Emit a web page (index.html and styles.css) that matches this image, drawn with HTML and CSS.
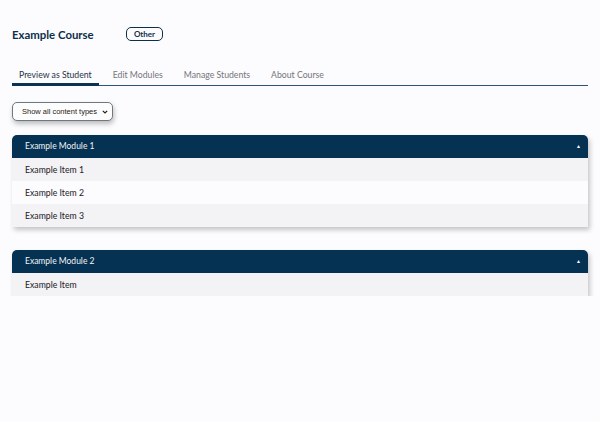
FILE: index.html
```html
<!DOCTYPE html>
<html>
<head>
<meta charset="utf-8">
<link rel="stylesheet" href="styles.css">
</head>
<body>
<div class="page">
  <div class="header">
    <h1 class="title">Example Course</h1>
    <span class="badge">Other</span>
  </div>
  <nav class="tabs">
    <a class="tab active">Preview as Student</a>
    <a class="tab">Edit Modules</a>
    <a class="tab">Manage Students</a>
    <a class="tab">About Course</a>
  </nav>
  <div class="filter">
    <div class="select-wrap">
      <select class="select">
        <option>Show all content types</option>
      </select>
      <svg class="chevron" width="6" height="4" viewBox="0 0 6 4"><path d="M0.8 0.8 L3 3 L5.2 0.8" fill="none" stroke="#222" stroke-width="1.2"/></svg>
    </div>
  </div>
  <div class="modules">
    <section class="module">
      <div class="module-head"><span>Example Module 1</span><span class="arrow">▲</span></div>
      <div class="item">Example Item 1</div>
      <div class="item">Example Item 2</div>
      <div class="item">Example Item 3</div>
    </section>
    <section class="module">
      <div class="module-head"><span>Example Module 2</span><span class="arrow">▲</span></div>
      <div class="item">Example Item</div>
    </section>
  </div>
</div>
</body>
</html>
```

FILE: styles.css
```css
html, body {
  margin: 0;
  padding: 0;
  background: #fcfbfd;
}
body {
  font-family: "Lato", "Noto Sans", sans-serif;
  color: #1d1d24;
}
.page {
  padding: 25px 12px 0 12px;
}
.header {
  display: flex;
  align-items: center;
  height: 18px;
}
.title {
  margin: 0;
  width: 114px;
  font-size: 11.4px;
  font-weight: 700;
  color: #0d2f4a;
}
.badge {
  display: inline-flex;
  align-items: center;
  justify-content: center;
  box-sizing: border-box;
  width: 37px;
  height: 14px;
  border: 1px solid #0d2f4a;
  border-radius: 5px;
  font-size: 8px;
  font-weight: 700;
  color: #0d2f4a;
}
.tabs {
  display: flex;
  gap: 7px;
  margin-top: 24px;
  border-bottom: 1.5px solid #2b5572;
}
.tab {
  padding: 0 7px;
  height: 19px;
  box-sizing: border-box;
  line-height: 15px;
  font-size: 8.7px;
  color: #75757c;
  border-bottom: 3px solid transparent;
  margin-bottom: -1.5px;
}
.tab.active {
  color: #1e3448;
  border-bottom-color: #0b3352;
}
.filter {
  display: flex;
  margin-top: 16px;
}
.select-wrap {
  position: relative;
  display: flex;
  width: 101px;
  height: 19px;
}
.select {
  appearance: none;
  -webkit-appearance: none;
  display: block;
  box-sizing: border-box;
  width: 101px;
  height: 19px;
  margin: 0;
  font-family: "Liberation Sans", Arial, sans-serif;
  font-size: 7.5px;
  color: #222;
  background: #fdfdfe;
  border: 1px solid #6d7885;
  border-radius: 5px;
  box-shadow: 1px 3px 5px rgba(0,0,0,0.25);
  padding: 0 10px 0 9px;
}
.chevron {
  position: absolute;
  right: 5px;
  top: 8px;
}
.modules {
  margin-top: 14px;
  display: flex;
  flex-direction: column;
  gap: 22.5px;
}
.module {
  border-radius: 5px 5px 0 0;
  box-shadow: 2px 3px 5px rgba(0,0,0,0.22);
}
.module-head {
  display: flex;
  align-items: center;
  justify-content: space-between;
  height: 23px;
  padding: 0 7px 0 13px;
  background: #053152;
  color: #f1f4f7;
  font-size: 8.5px;
  border-radius: 5px 5px 0 0;
}
.arrow {
  font-size: 5px;
  color: #fff;
}
.item {
  height: 23.3px;
  display: flex;
  align-items: center;
  padding-left: 13px;
  font-size: 8.7px;
  color: #202028;
  background: #f3f2f4;
}
.item:nth-child(odd) {
  background: #fcfbfd;
}
```
